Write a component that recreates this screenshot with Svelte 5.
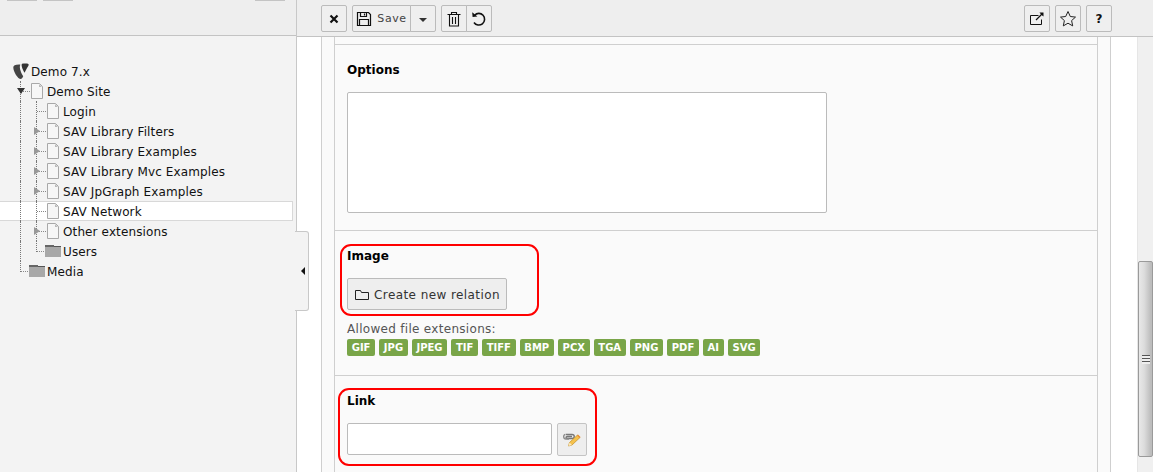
<script>
  // page tree rows: cells = guide cells in front of the icon
  const tree = [
    { label: 'Demo 7.x', icon: 'logo', cells: [] },
    { label: 'Demo Site', icon: 'page', cells: [{ t: 'tee', a: 'down' }] },
    { label: 'Login', icon: 'page', cells: [{ t: 'pipe' }, { t: 'tee' }] },
    { label: 'SAV Library Filters', icon: 'page', cells: [{ t: 'pipe' }, { t: 'tee', a: 'right' }] },
    { label: 'SAV Library Examples', icon: 'page', cells: [{ t: 'pipe' }, { t: 'tee', a: 'right' }] },
    { label: 'SAV Library Mvc Examples', icon: 'page', cells: [{ t: 'pipe' }, { t: 'tee', a: 'right' }] },
    { label: 'SAV JpGraph Examples', icon: 'page', cells: [{ t: 'pipe' }, { t: 'tee', a: 'right' }] },
    { label: 'SAV Network', icon: 'page', cells: [{ t: 'pipe' }, { t: 'tee' }], active: true },
    { label: 'Other extensions', icon: 'page', cells: [{ t: 'pipe' }, { t: 'tee', a: 'right' }] },
    { label: 'Users', icon: 'folder', cells: [{ t: 'pipe' }, { t: 'end' }] },
    { label: 'Media', icon: 'folder', cells: [{ t: 'end' }] }
  ];

  const extensions = ['GIF', 'JPG', 'JPEG', 'TIF', 'TIFF', 'BMP', 'PCX', 'TGA', 'PNG', 'PDF', 'AI', 'SVG'];
</script>

<div class="page">
  <aside class="sidebar">
    <div class="side-head">
      <span class="stub"></span>
      <span class="stub"></span>
      <span class="stub last"></span>
    </div>

    <ul class="tree">
      {#each tree as row}
        <li class="row" class:active={row.active} class:root={row.icon === 'logo'}>
          {#each row.cells as cell}
            <span class="cell {cell.t}">
              {#if cell.a}<i class="arrow {cell.a}"></i>{/if}
            </span>
          {/each}
          {#if row.icon === 'logo'}
            <svg class="ico" width="16" height="16" viewBox="0 0 16 16">
              <path d="M.3 4.200C.3 2.800 2 1.500 6 1.500c.8 0 1.200.1 1.400.3C6.500 3 6.800 5.500 7.500 7.500c.7 2.200 1.700 4.400 2.700 5.800C9.400 15 8.600 16 7.800 16 5 16 .3 9 .3 4.200z" fill="#444" />
              <path d="M9 .8c2-.4 5.300-.5 6.300.2.600.5.500 1.100 0 1.900-1.300 2-2.600 4.100-3.700 6.900C10 7.500 7.700 2.200 9 .8z" fill="#333" />
            </svg>
          {:else if row.icon === 'page'}
            <svg class="ico" width="16" height="16" viewBox="0 0 16 16">
              <path d="M2.500.5h8l3 3v12h-11z" fill="#f6f6f6" stroke="#a8a8a8" />
              <path d="M10 1l3 3h-3z" fill="#bbb" />
            </svg>
          {:else}
            <svg class="ico" width="16" height="16" viewBox="0 0 16 16">
              <path d="M0 2h9v2h7v10H0z" fill="#a8a8a8" />
              <path d="M0 2h9v2H0z" fill="#666" />
              <path d="M9 3h7v1H9z" fill="#555" />
            </svg>
          {/if}
          <span class="text">{row.label}</span>
        </li>
      {/each}
    </ul>

    <div class="collapse"><i class="arrow left"></i></div>
  </aside>

  <main class="main">
    <div class="toolbar">
      <div class="btn-group">
        <button class="btn" aria-label="Close">
          <svg width="16" height="16" viewBox="0 0 16 16"><path d="M4.500 4.500l7 7M11.500 4.500l-7 7" stroke="#111" stroke-width="2.200" /></svg>
        </button>
      </div>
      <div class="btn-group">
        <button class="btn save">
          <svg width="16" height="16" viewBox="0 0 16 16" fill="none" stroke="#111" stroke-width="1.200">
            <path d="M1.500 1.500h11l2 2v11h-13z" />
            <path d="M4.500 1.500v4h6v-4M8.500 2.500v2" />
            <path d="M3.500 14.500v-6h9v6" />
          </svg>
          <span>Save</span>
        </button>
        <button class="btn caret-btn" aria-label="More"><i class="caret"></i></button>
      </div>
      <div class="btn-group">
        <button class="btn" aria-label="Delete">
          <svg width="16" height="16" viewBox="0 0 16 16" fill="none" stroke="#111" stroke-width="1.100">
            <path d="M1.500 3.500h13M5.500 3.500v-2h5v2M3.500 3.500v11.500h9V3.500M6.500 6v7M9.500 6v7" />
          </svg>
        </button>
        <button class="btn" aria-label="Undo">
          <svg width="16" height="16" viewBox="0 0 16 16" fill="none" stroke="#111" stroke-width="1.600">
            <path d="M3.600 4.200A5.800 5.800 0 1 1 3 11.500" />
            <path d="M1.200 1.200l.4 4.900 4.800-.6z" fill="#111" stroke="none" />
          </svg>
        </button>
      </div>
      <div class="spacer"></div>
      <div class="btn-group">
        <button class="btn" aria-label="Open in new window">
          <svg width="16" height="16" viewBox="0 0 16 16" fill="none" stroke="#111" stroke-width="1">
            <path d="M9.500 4.500h-8v9h11v-5" />
            <path d="M7 9l6-6" stroke-width="1.300" />
            <path d="M10.500 1.500h4v4l-1.500-1.200-1.300-1.300z" fill="#111" stroke="none" />
          </svg>
        </button>
      </div>
      <div class="btn-group">
        <button class="btn" aria-label="Bookmark">
          <svg width="18" height="18" viewBox="0 0 18 18" fill="none" stroke="#222" stroke-width="1">
            <path d="M9 1.500l2.300 5 5.200.6-3.900 3.500 1.100 5.300L9 13.200l-4.700 2.700 1.100-5.300L1.500 7.100l5.200-.6z" />
          </svg>
        </button>
      </div>
      <div class="btn-group">
        <button class="btn help">?</button>
      </div>
    </div>

    <div class="content">
      <div class="scroll-area">
        <div class="panel">
          <div class="form">
            <section class="prev"></section>

            <section class="options">
              <div class="field">
                <h4>Options</h4>
                <div class="textarea"></div>
              </div>
            </section>

            <section class="image">
              <div class="field marked">
                <span class="mark mark-image"></span>
                <h4>Image</h4>
                <button class="relation">
                  <svg width="16" height="16" viewBox="0 0 16 16" fill="none" stroke="#222" stroke-width="1">
                    <path d="M1.500 12.500v-9h5l1 2h7v7z" />
                  </svg>
                  Create new relation
                </button>
                <p class="allowed">Allowed file extensions:</p>
                <div class="labels">
                  {#each extensions as ext}
                    <span class="label">{ext}</span>
                  {/each}
                </div>
              </div>
            </section>

            <section class="link">
              <div class="field marked">
                <span class="mark mark-link"></span>
                <h4>Link</h4>
                <div class="link-row">
                  <div class="input"></div>
                  <button class="wizard" aria-label="Link wizard">
                    <svg width="20" height="18" viewBox="0 0 20 18">
                      <path d="M4 3.500h6c3 0 3 4 0 4H5.500c-2 0-2-2 0-2H10" fill="none" stroke="#777" stroke-width="1.400" />
                      <path d="M3.500 3.500C1 3.500 1 8 4 8h3" fill="none" stroke="#8a8a8a" stroke-width="1.400" />
                      <path d="M6.500 15l1-3.500 8-7.500 2.500 2.500-8 7.500z" fill="#f5c24d" stroke="#c08d24" stroke-width=".7" />
                      <path d="M6.500 15l1-3.500 2.500 2.500z" fill="#fbe8bd" />
                      <path d="M15 4.500l1-1 2.500 2.500-1 1z" fill="#e88f3a" />
                    </svg>
                  </button>
                </div>
              </div>
            </section>
          </div>
        </div>
      </div>

      <div class="scrollbar">
        <div class="thumb">
          <span class="grip"></span>
        </div>
      </div>
    </div>
  </main>
</div>

<style>
  :global(body) {
    margin: 0;
    overflow: hidden;
  }
  .page {
    display: flex;
    width: 1153px;
    height: 472px;
    overflow: hidden;
    font-family: 'DejaVu Sans', Verdana, sans-serif;
    font-size: 12px;
    color: #111;
    background: #fff;
  }
  button {
    font-family: inherit;
    margin: 0;
  }

  /* left side */
  .sidebar {
    position: relative;
    width: 296px;
    flex: none;
    background: #f3f3f3;
    border-right: 1px solid #c8c8c8;
  }
  .side-head {
    display: flex;
    gap: 6px;
    height: 35px;
    padding-left: 7px;
    background: #eeeeee;
    border-bottom: 1px solid #c3c3c3;
  }
  .stub {
    width: 30px;
    height: 1px;
    background: #c4c4c4;
  }
  .stub.last {
    margin-left: auto;
    margin-right: 11px;
  }
  .tree {
    list-style: none;
    margin: 0;
    padding: 25px 0 0;
  }
  .row {
    display: flex;
    align-items: center;
    box-sizing: border-box;
    height: 20px;
    margin-right: 3px;
    padding-left: 12px;
  }
  .row .ico {
    margin-left: 1px;
  }
  .row.active {
    background: #fff;
    border-top: 1px solid #d8d8d8;
    border-bottom: 1px solid #d8d8d8;
    border-right: 1px solid #d8d8d8;
  }
  .cell {
    position: relative;
    align-self: stretch;
    flex: none;
    width: 16px;
  }
  .active .cell {
    margin: -1px 0;
  }
  .cell::before {
    content: '';
    position: absolute;
    left: 8px;
    top: 0;
    bottom: 0;
    border-left: 1px dotted #777;
  }
  .cell.end::before {
    bottom: 9px;
  }
  .cell.tee::after,
  .cell.end::after {
    content: '';
    position: absolute;
    left: 9px;
    right: -2px;
    top: 10px;
    border-top: 1px dotted #888;
  }
  .arrow {
    position: absolute;
    z-index: 1;
    width: 0;
    height: 0;
  }
  .arrow.right {
    left: 6px;
    top: 6px;
    border-top: 4px solid transparent;
    border-bottom: 4px solid transparent;
    border-left: 6px solid #999;
  }
  .arrow.down {
    left: 5px;
    top: 7px;
    border-left: 4px solid transparent;
    border-right: 4px solid transparent;
    border-top: 6px solid #333;
  }
  .ico {
    flex: none;
    position: relative;
    z-index: 1;
  }
  .text {
    margin-left: 2px;
    padding-top: 2px;
    white-space: nowrap;
    letter-spacing: 0.12px;
  }
  .collapse {
    position: absolute;
    left: 295px;
    top: 231px;
    width: 13px;
    height: 78px;
    background: #f3f3f3;
    border: 1px solid #c8c8c8;
    border-left: 0;
    border-radius: 0 3px 3px 0;
  }
  .arrow.left {
    left: 6px;
    top: 35px;
    border-top: 4px solid transparent;
    border-bottom: 4px solid transparent;
    border-right: 4px solid #111;
  }

  /* right side */
  .main {
    flex: 1;
    min-width: 0;
    display: flex;
    flex-direction: column;
  }
  .toolbar {
    display: flex;
    gap: 5px;
    box-sizing: border-box;
    height: 37px;
    padding: 5px 41px 0 24px;
    background: #eeeeee;
    border-bottom: 1px solid #c3c3c3;
  }
  .spacer {
    flex: 1;
  }
  .btn-group {
    display: flex;
    height: 27px;
  }
  .btn {
    display: flex;
    align-items: center;
    justify-content: center;
    box-sizing: border-box;
    width: 26px;
    height: 27px;
    padding: 0;
    background: #efefef;
    border: 1px solid #bbb;
    border-radius: 2px;
  }
  .btn-group .btn + .btn {
    margin-left: -1px;
    border-top-left-radius: 0;
    border-bottom-left-radius: 0;
  }
  .btn-group .btn:has(+ .btn) {
    border-top-right-radius: 0;
    border-bottom-right-radius: 0;
  }
  .btn.save {
    width: 59px;
    gap: 5px;
    font-size: 11px;
    letter-spacing: 0.6px;
    color: #444;
  }
  .caret {
    width: 0;
    height: 0;
    border-left: 4px solid transparent;
    border-right: 4px solid transparent;
    border-top: 4px solid #333;
    margin-top: 2px;
  }
  .help {
    font-size: 12px;
    font-weight: 700;
    color: #111;
  }

  .content {
    flex: 1;
    min-height: 0;
    display: flex;
  }
  .scroll-area {
    flex: 1;
    min-width: 0;
    padding-left: 24px;
    overflow: hidden;
  }
  .panel {
    box-sizing: border-box;
    width: 790px;
    height: 100%;
    padding: 0 12px;
    background: #fafafa;
    border-left: 1px solid #cfcfcf;
    border-right: 1px solid #cfcfcf;
  }
  .form {
    height: 100%;
    background: #fafafa;
    border-left: 1px solid #cfcfcf;
    border-right: 1px solid #cfcfcf;
  }
  section {
    box-sizing: border-box;
    padding-left: 12px;
    border-bottom: 1px solid #cfcfcf;
  }
  .prev {
    height: 8px;
  }
  .options {
    height: 186px;
    padding-top: 18px;
  }
  .image {
    height: 145px;
    padding-top: 18px;
  }
  .link {
    padding-top: 18px;
    border-bottom: 0;
  }
  .field {
    position: relative;
  }
  h4 {
    margin: 0;
    font-size: 12px;
    line-height: 14px;
    font-weight: 700;
    color: #000;
  }
  .textarea {
    box-sizing: border-box;
    width: 480px;
    height: 121px;
    margin-top: 15px;
    background: #fff;
    border: 1px solid #bbb;
    border-radius: 2px;
  }
  .relation {
    display: flex;
    align-items: center;
    gap: 4px;
    box-sizing: border-box;
    width: 160px;
    height: 32px;
    margin-top: 15px;
    padding: 2px 0 0 6px;
    font-size: 12px;
    letter-spacing: 0.42px;
    color: #333;
    background: #eeeeee;
    border: 1px solid #bbb;
    border-radius: 2px;
  }
  .allowed {
    margin: 12px 0 0;
    font-size: 12px;
    line-height: 14px;
    letter-spacing: 0.3px;
    color: #555;
  }
  .labels {
    display: flex;
    gap: 4px;
    margin-top: 3px;
  }
  .label {
    padding: 0 4.7px;
    font-size: 10px;
    line-height: 17px;
    font-weight: 700;
    color: #fff;
    background: #79a548;
    border-radius: 2px;
  }
  .link-row {
    display: flex;
    gap: 5px;
    margin-top: 15px;
  }
  .input {
    box-sizing: border-box;
    width: 205px;
    height: 32px;
    background: #fff;
    border: 1px solid #bbb;
    border-radius: 2px;
  }
  .wizard {
    display: flex;
    align-items: center;
    justify-content: center;
    box-sizing: border-box;
    width: 30px;
    height: 33px;
    padding: 0;
    background: #eeeeee;
    border: 1px solid #c4c4c4;
    border-radius: 2px;
  }

  /* red annotation frames drawn over the form */
  .mark {
    position: absolute;
    box-sizing: border-box;
    border: 2px solid #f00;
    border-radius: 11px;
    pointer-events: none;
  }
  .mark-image {
    left: -7px;
    top: -5px;
    width: 199px;
    height: 72px;
  }
  .mark-link {
    left: -9px;
    top: -6px;
    width: 259px;
    height: 78px;
  }

  .scrollbar {
    flex: none;
    box-sizing: border-box;
    width: 16px;
    padding-top: 224px;
    background: #f0f0f0;
    border-left: 1px solid #e6e6e6;
  }
  .thumb {
    display: flex;
    align-items: center;
    justify-content: center;
    box-sizing: border-box;
    width: 15px;
    height: 196px;
    background: linear-gradient(to right, #e8e8e8, #dcdcdc 40%, #bdbdbd 90%);
    border: 1px solid #9a9a9a;
    border-radius: 2px;
  }
  .grip {
    width: 8px;
    height: 9px;
    background: repeating-linear-gradient(to bottom, #555 0 1px, #eee 1px 3px);
  }
</style>
